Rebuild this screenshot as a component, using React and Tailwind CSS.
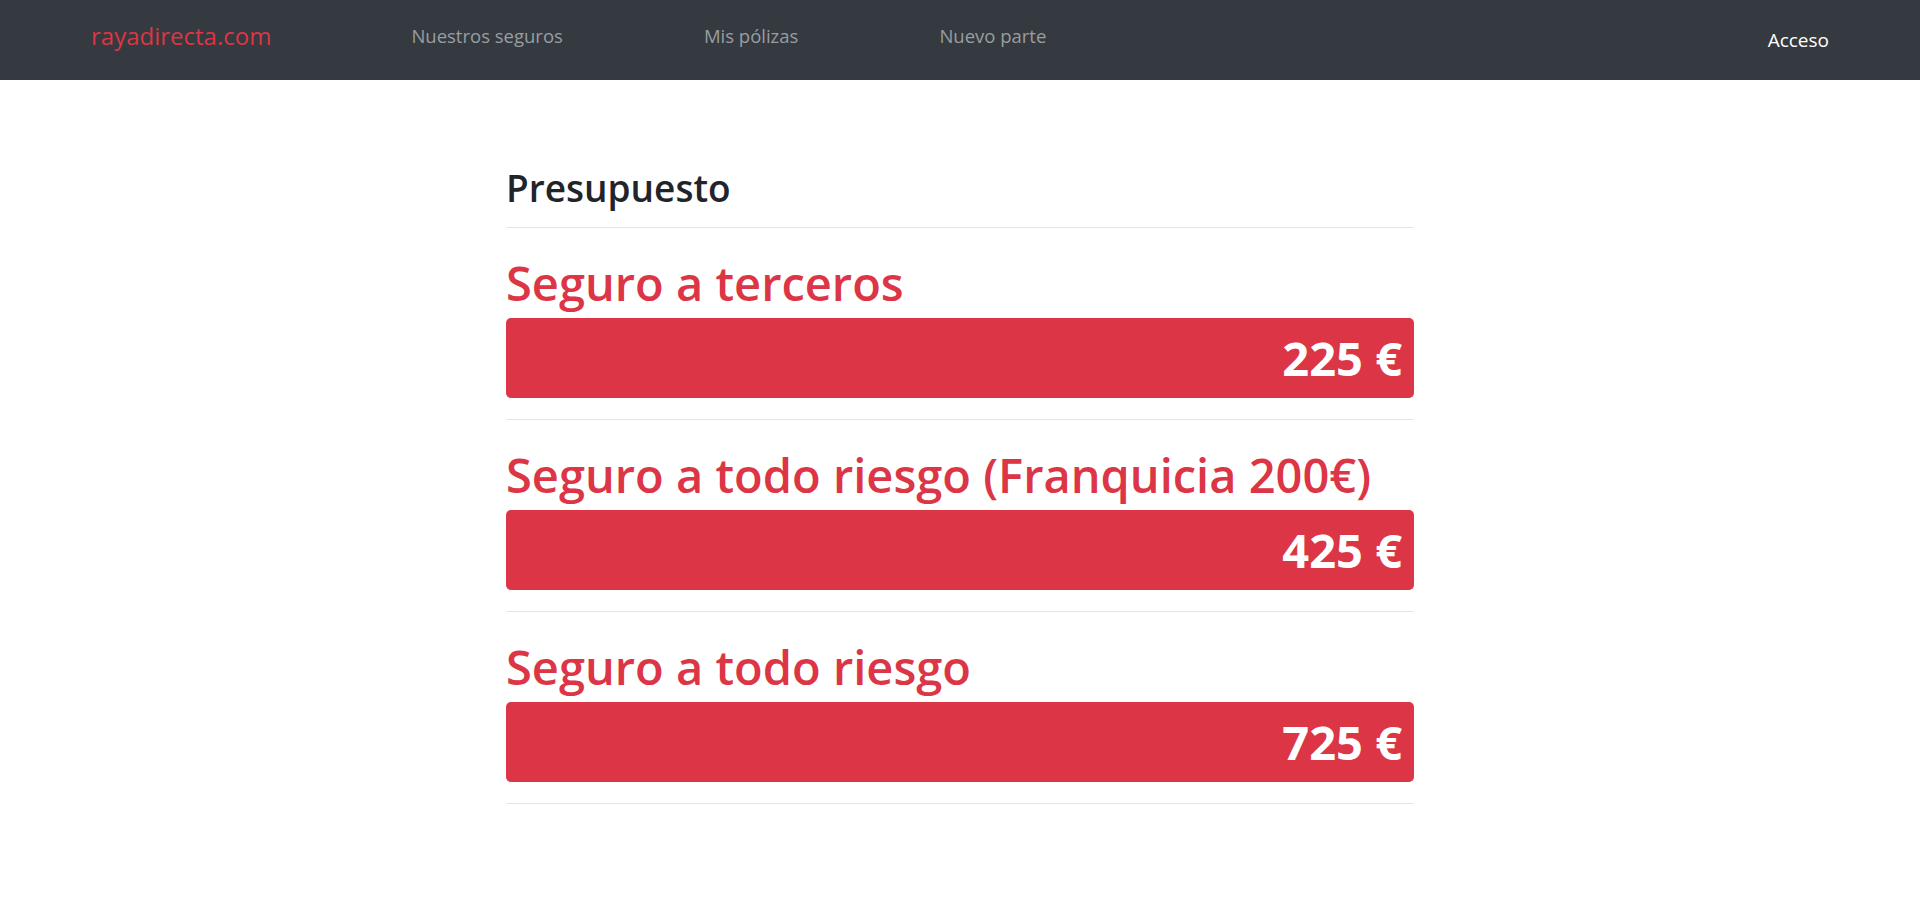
const links = ['Nuestros seguros', 'Mis pólizas', 'Nuevo parte'];

const quotes = [
  { name: 'Seguro a terceros', price: '225 €' },
  { name: 'Seguro a todo riesgo (Franquicia 200€)', price: '425 €' },
  { name: 'Seguro a todo riesgo', price: '725 €' },
];

const Navbar = () => (
  <nav className="h-[80px] bg-[#343a40] flex items-center px-[91px]">
    <a className="text-[24px] text-[#dc3545] leading-none -mt-[8px]">rayadirecta.com</a>
    <ul className="flex gap-[141px] ml-[140px] -mt-[8px]">
      {links.map((l) => (
        <li key={l} className="text-[18.5px] text-[#9a9da0] leading-none">{l}</li>
      ))}
    </ul>
    <a className="ml-auto text-[19px] text-white leading-none">Acceso</a>
  </nav>
);

const Quote = ({ name, price }) => (
  <div>
    <h2 className="mt-[25px] mb-[5px] text-[47px] leading-[60px] font-semibold text-[#dc3545]">{name}</h2>
    <div className="h-[80px] rounded-[5px] bg-[#dc3545] flex items-center justify-end px-[12px]">
      <span className="text-[47px] font-bold text-white leading-none">{price}</span>
    </div>
    <hr className="mt-[21px] border-0 h-px bg-[#e6e6e6]" />
  </div>
);

export default function App() {
  return (
    <div className="min-h-screen bg-white" style={{ fontFamily: '"Open Sans", "Noto Sans", sans-serif' }}>
      <Navbar />
      <main className="w-[908px] mx-auto pt-[81px] pb-[80px]">
        <h1 className="text-[37px] leading-[54px] font-semibold text-[#212529]">Presupuesto</h1>
        <hr className="mt-[12px] border-0 h-px bg-[#e6e6e6]" />
        {quotes.map((q) => (
          <Quote key={q.name} {...q} />
        ))}
      </main>
    </div>
  );
}
